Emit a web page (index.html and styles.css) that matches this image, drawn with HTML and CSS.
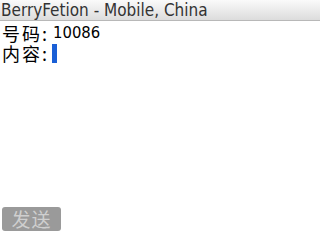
FILE: index.html
```html
<!DOCTYPE html>
<html lang="zh">
<head>
    <meta charset="UTF-8">
    <link rel="stylesheet" href="styles.css">
    <title>BerryFetion</title>
</head>
<body>
    <div class="screen">
        <div class="title-bar">BerryFetion - Mobile, China</div>
        <div class="content">
            <div class="field"><span class="label">号码:</span><span class="value">10086</span></div>
            <div class="field"><span class="label">内容:</span><span class="cursor"></span></div>
        </div>
        <div class="footer">
            <button class="send-btn" disabled>发送</button>
        </div>
    </div>
</body>
</html>
```
FILE: styles.css
```css
html, body {
    margin: 0;
    padding: 0;
    background-color: #ffffff;
}

.screen {
    width: 320px;
    height: 240px;
    display: flex;
    flex-direction: column;
    overflow: hidden;
}

.title-bar {
    height: 20px;
    line-height: 20px;
    padding-left: 1px;
    font-family: "DejaVu Sans Condensed", "DejaVu Sans", sans-serif;
    font-size: 17px;
    color: #333333;
    background: linear-gradient(#fafafa, #dcdcdc);
    border-bottom: 1px solid #b8b8b8;
    white-space: nowrap;
}

.content {
    flex: 1;
    padding: 2px 0 0 2px;
    font-family: "Noto Sans CJK SC", "DejaVu Sans", sans-serif;
    font-size: 18px;
    color: #000000;
}

.field {
    height: 20px;
    line-height: 20px;
    display: flex;
    align-items: center;
}

.label {
    letter-spacing: 2px;
}

.value {
    margin-left: 4px;
    font-family: "DejaVu Sans Condensed", sans-serif;
    font-size: 16.5px;
}

.cursor {
    display: inline-block;
    width: 5px;
    height: 19px;
    margin-left: 3px;
    background-color: #1a5fd6;
}

.footer {
    padding: 0 0 9px 2px;
}

.send-btn {
    width: 59px;
    height: 24px;
    padding: 0;
    border: none;
    border-radius: 3px;
    background-color: #9a9a9a;
    color: #cfcfcf;
    font-family: "Noto Sans CJK SC", sans-serif;
    font-size: 19px;
    line-height: 24px;
    letter-spacing: 1px;
}
```
